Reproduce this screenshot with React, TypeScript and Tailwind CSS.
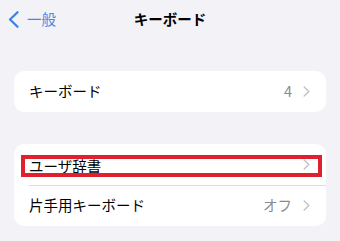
import React from "react";

const font = { fontFamily: '"Noto Sans CJK JP", "Noto Sans", sans-serif' };

function Chevron() {
  return (
    <svg width="7" height="11" viewBox="0 0 7 11" fill="none" className="shrink-0">
      <path d="M1.2 1 L5.8 5.5 L1.2 10" stroke="#c4c4c8" strokeWidth="1.5" strokeLinecap="round" strokeLinejoin="round" />
    </svg>
  );
}

function Row({ label, value, shift }: { label: string; value?: string; shift?: boolean }) {
  return (
    <div className="h-[41px] flex items-center pl-[15px] pr-[16px]">
      <span className={shift ? "flex-1 text-[14.5px] text-black leading-none pt-[3px]" : "flex-1 text-[14.5px] text-black leading-none"}>{label}</span>
      {value && <span className="text-[14.5px] text-[#8a8a8e] leading-none mr-[11px]">{value}</span>}
      <Chevron />
    </div>
  );
}

export default function App() {
  return (
    <div className="w-[340px] h-[241px] bg-[#f2f2f7] overflow-hidden" style={font}>
      <div className="relative h-[38px] flex items-center justify-center">
        <div className="absolute left-[8px] top-[11px] flex items-center gap-[8px]">
          <svg width="11" height="17" viewBox="0 0 11 17" fill="none">
            <path d="M9.5 1.2 L2 8.5 L9.5 15.8" stroke="#3a7ee8" strokeWidth="2.2" strokeLinecap="round" strokeLinejoin="round" />
          </svg>
          <span className="text-[14.5px] text-[#4a86e6] leading-none">一般</span>
        </div>
        <span className="text-[14.5px] font-bold text-black leading-none">キーボード</span>
      </div>
      <div className="mt-[33px] mx-[14px] bg-white rounded-[10px]">
        <Row label="キーボード" value="4" />
      </div>
      <div className="relative mt-[32px] mx-[14px] bg-white rounded-[10px]">
        <Row label="ユーザ辞書" shift />
        <div className="ml-[15px] h-px bg-[#dcdce0]" />
        <div className="-mt-px">
          <Row label="片手用キーボード" value="オフ" />
        </div>
        <div className="absolute left-[7px] top-[11px] w-[301px] h-[22px] border-[4px] border-[#e0202c]" />
      </div>
    </div>
  );
}
